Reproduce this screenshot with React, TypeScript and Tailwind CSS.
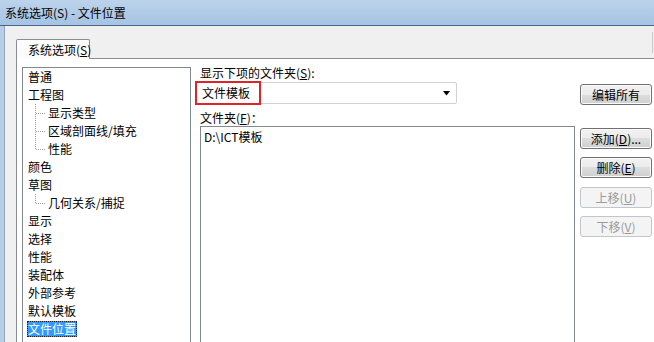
import React from "react";

const FONT = "font-['Noto_Sans_CJK_SC','Noto_Sans',sans-serif]";

function U({ children }: { children: React.ReactNode }) {
  return <span className="underline underline-offset-[1px]">{children}</span>;
}

function Connector({ last }: { last?: boolean }) {
  return (
    <svg width="11" height="18" className="shrink-0" shapeRendering="crispEdges">
      <line
        x1="0.5"
        y1="0"
        x2="0.5"
        y2={last ? 9 : 18}
        stroke="#a0a0a0"
        strokeWidth="1"
        strokeDasharray="1 1"
      />
      <line x1="1" y1="9.5" x2="11" y2="9.5" stroke="#a0a0a0" strokeWidth="1" strokeDasharray="1 1" />
    </svg>
  );
}

function TopItem({ label }: { label: string }) {
  return (
    <div className="h-[18px] flex items-center pl-[5px] text-[12px] leading-none whitespace-nowrap">{label}</div>
  );
}

function ChildItem({ label, last }: { label: string; last?: boolean }) {
  return (
    <div className="h-[18px] flex items-center pl-[12px] text-[12px] leading-none whitespace-nowrap">
      <Connector last={last} />
      <span className="ml-[2px]">{label}</span>
    </div>
  );
}

function Btn({ children, disabled }: { children: React.ReactNode; disabled?: boolean }) {
  return (
    <div
      className={
        disabled
          ? "h-[21px] w-[72px] rounded-[3px] border border-[#c3c6c9] bg-[#f4f4f4] text-[#9a9a9a] flex items-center justify-center text-[12px] leading-none"
          : "h-[21px] w-[72px] rounded-[3px] border border-[#707070] bg-[linear-gradient(#f2f2f2,#ebebeb_50%,#dddddd_50%,#cfcfcf)] shadow-[inset_0_0_0_1px_#fbfbfb] flex items-center justify-center text-[12px] leading-none"
      }
    >
      {children}
    </div>
  );
}

export default function App() {
  return (
    <div className={`w-[654px] h-[342px] overflow-hidden flex flex-col bg-[#f0f0f0] text-black ${FONT}`}>
      {/* title bar */}
      <div className="h-[26px] shrink-0 bg-gradient-to-b from-[#bcd3ec] to-[#a6c3e2] border-b border-[#4a6690] flex items-center pl-[5px] text-[12px] leading-none whitespace-nowrap">
        系统选项(S) - 文件位置
      </div>
      <div className="flex flex-1 min-h-0">
        <div className="w-[4px] shrink-0 bg-[#b8cee8]" />
        <div className="w-px shrink-0 bg-[#98a4b4]" />
        <div className="flex-1 flex flex-col pl-[11px] min-w-0 min-h-0">
          {/* tab header */}
          <div className="h-[33px] shrink-0 flex items-stretch">
            <div className="flex flex-col justify-end">
              <div className="h-[20px] w-[74px] bg-[#fcfcfc] border-l border-t border-r border-[#898c95] rounded-t-[2px] flex items-center pl-[11px] text-[12px] leading-none whitespace-nowrap">
                系统选项(<U>S</U>)
              </div>
            </div>
            <div className="flex-1 border-b border-[#898c95] flex justify-end pt-[6px]">
              <div className="w-px h-[21px] bg-[#c9c9c9] mr-px" />
            </div>
          </div>
          {/* tab page */}
          <div className="flex-1 min-h-0 bg-white border-l border-[#898c95] flex items-start">
            {/* tree */}
            <div className="ml-[5px] mt-[8px] w-[169px] h-[300px] shrink-0 border border-[#828790] bg-white">
              <TopItem label="普通" />
              <TopItem label="工程图" />
              <ChildItem label="显示类型" />
              <ChildItem label="区域剖面线/填充" />
              <ChildItem label="性能" last />
              <TopItem label="颜色" />
              <TopItem label="草图" />
              <ChildItem label="几何关系/捕捉" last />
              <TopItem label="显示" />
              <TopItem label="选择" />
              <TopItem label="性能" />
              <TopItem label="装配体" />
              <TopItem label="外部参考" />
              <TopItem label="默认模板" />
              <div className="h-[18px] flex items-center pl-[4px] text-[12px] leading-none whitespace-nowrap">
                <span className="h-[16px] flex items-center border border-dotted border-[#222] bg-[#3399ff] text-white">
                  文件位置
                </span>
              </div>
            </div>
            {/* middle column */}
            <div className="ml-[4px] w-[380px] shrink-0 flex flex-col">
              <div className="mt-[7px] h-[14px] pl-[5px] flex items-center text-[12px] leading-none whitespace-nowrap">
                显示下项的文件夹(<U>S</U>):
              </div>
              <div className="relative mt-[2px] h-[22px] w-[262px] border border-[#d2d2d2] rounded-[2px] bg-white flex items-center justify-between pl-[6px] pr-[5px] text-[12px] leading-none">
                <span>文件模板</span>
                <svg width="8" height="5" viewBox="0 0 8 5">
                  <path d="M0 0H7L3.5 4.5Z" fill="#000" />
                </svg>
                <div className="absolute -left-px -top-[2px] w-[66px] h-[24px] border-2 border-[#d9262b]" />
              </div>
              <div className="mt-[7px] h-[14px] pl-[5px] flex items-center text-[12px] leading-none whitespace-nowrap">
                文件夹(<U>F</U>)：
              </div>
              <div className="mt-[1px] ml-[5px] w-[375px] h-[260px] border border-[#828790] bg-white pl-[3px] pt-[1px]">
                <div className="h-[18px] flex items-center text-[12px] leading-none">D:\ICT模板</div>
              </div>
            </div>
            {/* buttons */}
            <div className="ml-[5px] flex flex-col shrink-0">
              <div className="mt-[25px]">
                <Btn>编辑所有</Btn>
              </div>
              <div className="mt-[23px]">
                <Btn>
                  添加(<U>D</U>)...
                </Btn>
              </div>
              <div className="mt-[8px]">
                <Btn>
                  删除(<U>E</U>)
                </Btn>
              </div>
              <div className="mt-[9px]">
                <Btn disabled>
                  上移(<U>U</U>)
                </Btn>
              </div>
              <div className="mt-[8px]">
                <Btn disabled>
                  下移(<U>V</U>)
                </Btn>
              </div>
            </div>
          </div>
        </div>
      </div>
    </div>
  );
}
